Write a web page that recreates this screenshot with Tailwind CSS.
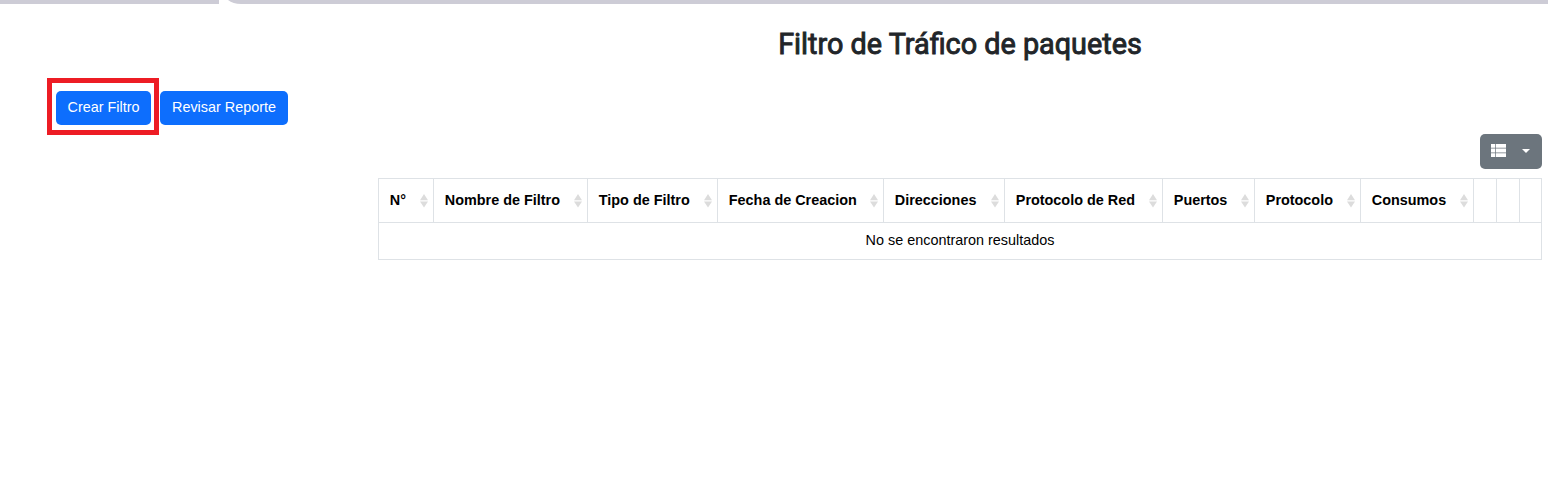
<!DOCTYPE html>
<html lang="es">
<head>
<meta charset="utf-8">
<title>Filtro de Tráfico de paquetes</title>
<script src="https://cdn.jsdelivr.net/npm/@tailwindcss/browser@4"></script>
</head>
<body class="bg-white font-['Liberation_Sans',Arial,sans-serif] text-[14.4px] leading-[21px] text-black overflow-hidden">
<svg class="hidden">
  <symbol id="sort" viewBox="0 0 8 14"><path d="M4 0 8 6.2H0zM0 7.4h8L4 13.4z" fill="#dcdcdc"/></symbol>
</svg>
<div class="flex h-1 justify-between">
  <div class="w-[219px] bg-[#cdccd6]"></div>
  <svg class="h-1 w-[1320px]" viewBox="0 0 1320 4"><path d="M0 0H1320V4H13Q5 4 0 0z" fill="#cdccd6"/></svg>
</div>
<div class="flex h-[486px]">
  <aside class="w-[378px] pl-[47px] pt-[74px]">
    <div class="flex items-center gap-px">
      <div class="h-[57px] w-[112px] border-5 border-[#ed1c24] pl-1 pt-2">
        <button class="block h-[34px] w-[95px] rounded-[5px] bg-[#0d6efd] pb-[2px] text-center text-white whitespace-nowrap">Crear Filtro</button>
      </div>
      <button class="mt-[3px] h-[34px] w-[128px] rounded-[5px] bg-[#0d6efd] pb-[2px] text-center text-white whitespace-nowrap">Revisar Reporte</button>
    </div>
  </aside>
  <main class="w-[1164px]">
    <h1 class="h-[130px] pt-[22px] text-center font-[Roboto,sans-serif] text-[28.8px] leading-9 font-normal text-[#212529] [-webkit-text-stroke:0.9px_#212529]">Filtro de Tráfico de paquetes</h1>
    <div class="flex h-11 justify-end">
      <button class="flex h-[35px] w-[62px] items-center rounded-[5px] bg-[#6c757d] pb-[2px] pl-[11px]">
        <svg class="h-[13px] w-[15px]" viewBox="0 0 15 13" fill="#fff"><path d="M0 0h4.3v3.8H0zM5 0h10v3.8H5zM0 4.6h4.3v3.8H0zM5 4.6h10v3.8H5zM0 9.2h4.3V13H0zM5 9.2h10V13H5z"/></svg>
        <svg class="ml-4 h-1 w-2" viewBox="0 0 8 4" fill="#fff"><path d="M0 0h8L4 4z"/></svg>
      </button>
    </div>
    <table class="w-[1164px] table-fixed border-separate border-spacing-0 border-l border-t border-[#dee2e6]">
      <colgroup><col class="w-[55px]"><col class="w-[154px]"><col class="w-[130px]"><col class="w-[166px]"><col class="w-[121px]"><col class="w-[158px]"><col class="w-[92px]"><col class="w-[106px]"><col class="w-[113px]"><col class="w-[23px]"><col class="w-[23px]"><col class="w-[22px]"></colgroup>
      <thead>
        <tr class="h-11 text-left whitespace-nowrap [&>th]:border-r [&>th]:border-b [&>th]:border-[#dee2e6] [&>th]:p-0 [&_div]:flex [&_div]:items-center [&_div]:justify-between [&_div]:pl-[10.8px] [&_div]:pr-[4.6px] [&_svg]:h-[14px] [&_svg]:w-2">
          <th><div><span>N°</span><svg><use href="#sort"/></svg></div></th>
          <th><div><span>Nombre de Filtro</span><svg><use href="#sort"/></svg></div></th>
          <th><div><span>Tipo de Filtro</span><svg><use href="#sort"/></svg></div></th>
          <th><div><span>Fecha de Creacion</span><svg><use href="#sort"/></svg></div></th>
          <th><div><span>Direcciones</span><svg><use href="#sort"/></svg></div></th>
          <th><div><span>Protocolo de Red</span><svg><use href="#sort"/></svg></div></th>
          <th><div><span>Puertos</span><svg><use href="#sort"/></svg></div></th>
          <th><div><span>Protocolo</span><svg><use href="#sort"/></svg></div></th>
          <th><div><span>Consumos</span><svg><use href="#sort"/></svg></div></th>
          <th></th><th></th><th></th>
        </tr>
      </thead>
      <tbody>
        <tr class="h-[37px]"><td colspan="12" class="border-r border-b border-[#dee2e6] p-0 pb-px text-center">No se encontraron resultados</td></tr>
      </tbody>
    </table>
  </main>
</div>
</body>
</html>
